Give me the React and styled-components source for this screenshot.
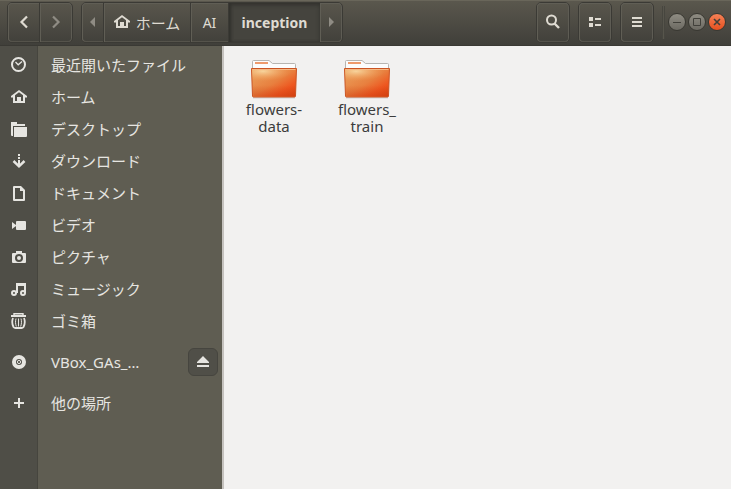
import React from 'react';
import styled, { createGlobalStyle } from 'styled-components';

const GlobalStyle = createGlobalStyle`
  * { box-sizing: border-box; }
  body {
    margin: 0;
    background: #f2f1f0;
    font-family: "Noto Sans", "Noto Sans CJK JP", sans-serif;
    font-size: 15px;
    color: #3c3c3c;
  }
  button { font: inherit; color: inherit; padding: 0; margin: 0; cursor: default; }
  svg { display: block; flex: none; }
`;

const Window = styled.div`
  display: flex;
  flex-direction: column;
  min-height: 100vh;
`;

const HeaderBar = styled.header`
  display: flex;
  align-items: center;
  height: 46px;
  padding: 0 5px 2px 7px;
  color: #dfdbd2;
  background: linear-gradient(#5a574d, #403f3a);
  border-top: 1px solid #69665a;
  border-bottom: 1px solid #3a3934;
`;

const Group = styled.div`
  display: flex;
  height: 41px;
  margin-right: 8px;
  border: 1px solid #3b3a35;
  border-radius: 5px;
  box-shadow: inset 0 0 0 1px #5e5c54;
  overflow: hidden;
`;

const BarButton = styled.button`
  display: flex;
  align-items: center;
  justify-content: center;
  gap: 6px;
  width: ${(p) => p.$width}px;
  border: 0;
  border-left: ${(p) => (p.$divided ? '1px solid #3b3a35' : '0')};
  color: ${(p) => (p.$dim ? '#8f8c84' : '#dfdbd2')};
  font-weight: ${(p) => (p.$active ? 700 : 400)};
  font-size: ${(p) => (p.$latin ? 14 : 15)}px;
  background: ${(p) => (p.$active ? '#45443e' : 'transparent')};
  box-shadow: ${(p) =>
    p.$active
      ? 'inset 0 2px 4px #33322e, inset 2px 0 3px #33322e'
      : 'inset 1px 1px 0 #605e55, inset 0 -1px 0 #55534b'};
`;

const Spacer = styled.div`
  flex: 1;
`;

const Separator = styled.div`
  width: 3px;
  height: 33px;
  margin-right: 3px;
  border-left: 1px solid #47463f;
  border-right: 1px solid #47463f;
  background: #57554c;
`;

const WindowControls = styled.div`
  display: flex;
  gap: 2px;
`;

const RoundButton = styled.button`
  display: flex;
  align-items: center;
  justify-content: center;
  width: 18px;
  height: 18px;
  border: 1px solid #393832;
  border-radius: 50%;
  color: #41403a;
  background: ${(p) => (p.$close ? 'linear-gradient(#f58156, #e5501f)' : 'linear-gradient(#8f8c83, #6c6a62)')};
`;

const Body = styled.div`
  display: flex;
  flex: 1;
`;

const Sidebar = styled.nav`
  flex: none;
  width: 224px;
  padding-top: 3px;
  color: #e6e5e1;
  border-right: 2px solid #c5c2be;
  background: linear-gradient(to right, #4f4e47 0 37px, #46453e 37px 38px, #5f5d52 38px);
`;

const Place = styled.div`
  display: flex;
  align-items: center;
  height: ${(p) => (p.$tall ? 41 : 32)}px;
  margin-top: ${(p) => (p.$gap ? 4 : 0)}px;
  padding-right: 4px;
`;

const PlaceLink = styled.a`
  display: flex;
  flex: 1;
  align-items: center;
  gap: 24px;
  padding-left: 11px;
  line-height: 32px;
  color: inherit;
  text-decoration: none;
  white-space: nowrap;
`;

const EjectButton = styled.button`
  display: flex;
  align-items: center;
  justify-content: center;
  width: 30px;
  height: 28px;
  border: 1px solid #46453f;
  border-radius: 6px;
  background: #504f48;
`;

const Files = styled.main`
  display: flex;
  flex: 1;
  flex-wrap: wrap;
  align-content: flex-start;
  gap: 13px;
  padding: 12px 10px;
  background: #f2f1f0;
`;

const FileItem = styled.button`
  display: flex;
  flex-direction: column;
  align-items: center;
  width: 80px;
  border: 0;
  background: none;
`;

const FileName = styled.span`
  margin-top: 1px;
  line-height: 17px;
  white-space: pre-line;
`;

const Icon = ({ children }) => (
  <svg width="16" height="16" viewBox="0 0 16 16" fill="currentColor" aria-hidden="true">
    {children}
  </svg>
);

const shapes = {
  clock: (
    <g fill="none" stroke="currentColor">
      <circle cx="7.500" cy="7.500" r="6.500" strokeWidth="2" />
      <path d="M4.500 5 7.200 7.800 11 4.500" strokeWidth="1.300" />
    </g>
  ),
  home: (
    <path fillRule="evenodd" d="M8 1 0 7v1.500h2V14h12V8.500h2V7zM8 3.300l4 3V12h-2V8H6v4H4V6.300z" />
  ),
  folder: <path d="M0 1h6v2h8v2H2v10H1a1 1 0 0 1-1-1zM3 6h13v9a1 1 0 0 1-1 1H3z" />,
  download: (
    <>
      <path d="M7 1h2v2H7zM7 4h2v2H7zM7 7h2v6H7z" />
      <path d="M2.500 8 8 13.300 13.500 8" fill="none" stroke="currentColor" strokeWidth="2.500" />
    </>
  ),
  document: <path fillRule="evenodd" d="M3 1h7l4 4v10a1 1 0 0 1-1 1H3a1 1 0 0 1-1-1V2a1 1 0 0 1 1-1zm1 2v11h8V6H9V3z" />,
  video: <path d="M1 5l4 3v1l-4 3zM6 4h8a1 1 0 0 1 1 1v7a1 1 0 0 1-1 1H6a1 1 0 0 1-1-1V5a1 1 0 0 1 1-1z" />,
  camera: (
    <path
      fillRule="evenodd"
      d="M5 2h6v2h3a1 1 0 0 1 1 1v8a1 1 0 0 1-1 1H2a1 1 0 0 1-1-1V5a1 1 0 0 1 1-1h3zM8 5a4 4 0 1 0 0 8 4 4 0 0 0 0-8zm0 2a2 2 0 1 1 0 4 2 2 0 0 1 0-4z"
    />
  ),
  music: (
    <g fill="none" stroke="currentColor" strokeWidth="2">
      <circle cx="3" cy="12" r="2" />
      <circle cx="12" cy="12" r="2" />
      <path d="M6 12V3h8v9M6 4h8" />
    </g>
  ),
  trash: (
    <g fill="none" stroke="currentColor">
      <path d="M0 3h15" strokeWidth="2" />
      <path d="M3 2.500V.7h9v1.800" strokeWidth="1.400" />
      <path d="M2 5c-1.200 3-1 6 .5 9 .5.700 1 1 2 1h6c1 0 1.500-.3 2-1 1.500-3 1.700-6 .5-9" strokeWidth="1.800" />
      <path d="M5 5.500c-.7 2.500-.7 5 .3 8M7.500 5.500v8M10 5.500c.7 2.500.7 5-.3 8" strokeWidth="1" />
    </g>
  ),
  disc: (
    <>
      <path fillRule="evenodd" d="M8 1a7 7 0 1 0 0 14A7 7 0 0 0 8 1zm0 4a3 3 0 1 1 0 6 3 3 0 0 1 0-6z" />
      <circle cx="8" cy="8" r="1.600" fill="none" stroke="currentColor" strokeWidth="1" />
    </>
  ),
  plus: <path d="M7 3h2v4h4v2H9v4H7V9H3V7h4z" />,
  eject: <path d="M8 2l6 6v1H2V8zM2 11h12v2H2z" />,
  back: <path d="M11 2.500 5.500 8 11 13.500" fill="none" stroke="currentColor" strokeWidth="2.200" />,
  forward: <path d="M5 2.500 10.500 8 5 13.500" fill="none" stroke="currentColor" strokeWidth="2.200" />,
  left: <path d="M10 3v10L5 8z" />,
  right: <path d="M6 3v10l5-5z" />,
  search: (
    <g fill="none" stroke="currentColor">
      <circle cx="6.500" cy="6" r="4.500" strokeWidth="2" />
      <path d="M9.500 9.500 14 14" strokeWidth="2.400" />
    </g>
  ),
  list: <path d="M2 3h4v4H2zM2 9h4v4H2zM8 4h6v2H8zM8 10h6v2H8z" />,
  menu: <path d="M3 3h10v2H3zM3 7h10v2H3zM3 11h10v2H3z" />,
  minimize: <path d="M4 8h8v1H4z" />,
  maximize: <path d="M4.500 4.500h7v7h-7z" fill="none" stroke="currentColor" />,
  close: <path d="M5 5l6 6M11 5l-6 6" fill="none" stroke="currentColor" strokeWidth="1.600" />,
};

const FolderIcon = () => (
  <svg width="48" height="42" viewBox="0 0 48 42" aria-hidden="true">
    <defs>
      <linearGradient id="front" x1="0" y1="0" x2="1" y2="1">
        <stop offset="0" stopColor="#eaa560" />
        <stop offset=".5" stopColor="#e8803f" />
        <stop offset=".75" stopColor="#ee561f" />
        <stop offset="1" stopColor="#d9410f" />
      </linearGradient>
      <radialGradient id="glow" cx=".25" cy=".15" r=".65">
        <stop offset="0" stopColor="#f8d7a0" stopOpacity=".95" />
        <stop offset="1" stopColor="#f2a661" stopOpacity="0" />
      </radialGradient>
      <linearGradient id="base" x1="0" y1="0" x2="0" y2="1">
        <stop offset=".6" stopColor="#c83c10" stopOpacity="0" />
        <stop offset="1" stopColor="#c83c10" stopOpacity=".4" />
      </linearGradient>
    </defs>
    <path d="M3 39h42v1.500H3z" fill="#000" opacity=".13" />
    <path d="M2.500 14V3.500q0-1 1-1h15.500l3.500 3h22q1 0 1 1V14z" fill="#fcfcfc" stroke="#b7b5b1" />
    <path d="M5 4h13v2H5z" fill="#ee9a6c" />
    <path d="M1.500 10.500h45L45.500 38q0 1-1 1h-41q-1 0-1-1z" fill="url(#front)" stroke="#cb5423" />
    <path d="M2 11h44l-.7 27h-42z" fill="url(#base)" />
    <path d="M2 11h44l-.4 6C34 20 18 26 2.700 26z" fill="url(#glow)" />
    <path d="M2.500 11.500h43" stroke="#f5b984" />
  </svg>
);

const places = [
  { icon: 'clock', name: '最近開いたファイル' },
  { icon: 'home', name: 'ホーム' },
  { icon: 'folder', name: 'デスクトップ' },
  { icon: 'download', name: 'ダウンロード' },
  { icon: 'document', name: 'ドキュメント' },
  { icon: 'video', name: 'ビデオ' },
  { icon: 'camera', name: 'ピクチャ' },
  { icon: 'music', name: 'ミュージック' },
  { icon: 'trash', name: 'ゴミ箱' },
  { icon: 'disc', name: 'VBox_GAs_…', eject: true, tall: true, gap: true },
  { icon: 'plus', name: '他の場所', tall: true },
];

const files = ['flowers-\ndata', 'flowers_\ntrain'];

export default function App() {
  return (
    <Window>
      <GlobalStyle />
      <HeaderBar>
        <Group>
          <BarButton $width={31} aria-label="戻る"><Icon>{shapes.back}</Icon></BarButton>
          <BarButton $width={33} $divided $dim aria-label="進む"><Icon>{shapes.forward}</Icon></BarButton>
        </Group>
        <Group>
          <BarButton $width={21} $dim aria-label="前のパス"><Icon>{shapes.left}</Icon></BarButton>
          <BarButton $width={87} $divided><Icon>{shapes.home}</Icon>ホーム</BarButton>
          <BarButton $width={38} $divided $latin>AI</BarButton>
          <BarButton $width={92} $divided $latin $active aria-current="page">inception</BarButton>
          <BarButton $width={22} $dim aria-label="次のパス"><Icon>{shapes.right}</Icon></BarButton>
        </Group>
        <Spacer />
        <Group><BarButton $width={32} aria-label="検索"><Icon>{shapes.search}</Icon></BarButton></Group>
        <Group><BarButton $width={32} aria-label="リスト表示"><Icon>{shapes.list}</Icon></BarButton></Group>
        <Group><BarButton $width={32} aria-label="メニュー"><Icon>{shapes.menu}</Icon></BarButton></Group>
        <Separator />
        <WindowControls>
          <RoundButton aria-label="最小化"><Icon>{shapes.minimize}</Icon></RoundButton>
          <RoundButton aria-label="最大化"><Icon>{shapes.maximize}</Icon></RoundButton>
          <RoundButton $close aria-label="閉じる"><Icon>{shapes.close}</Icon></RoundButton>
        </WindowControls>
      </HeaderBar>
      <Body>
        <Sidebar>
          {places.map((p) => (
            <Place key={p.name} $tall={p.tall} $gap={p.gap}>
              <PlaceLink href="#">
                <Icon>{shapes[p.icon]}</Icon>
                <span>{p.name}</span>
              </PlaceLink>
              {p.eject && <EjectButton aria-label="取り出す"><Icon>{shapes.eject}</Icon></EjectButton>}
            </Place>
          ))}
        </Sidebar>
        <Files>
          {files.map((name) => (
            <FileItem key={name}>
              <FolderIcon />
              <FileName>{name}</FileName>
            </FileItem>
          ))}
        </Files>
      </Body>
    </Window>
  );
}
